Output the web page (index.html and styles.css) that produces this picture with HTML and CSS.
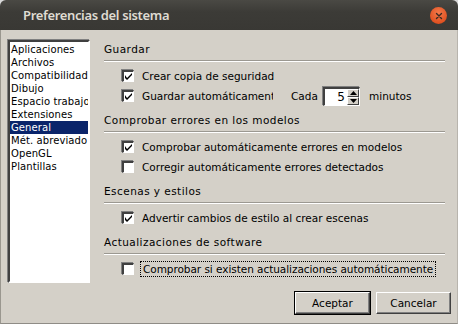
FILE: index.html
```html
<!DOCTYPE html>
<html lang="es">
<head>
  <meta charset="utf-8">
  <title>Preferencias del sistema</title>
  <link rel="stylesheet" href="styles.css">
</head>
<body>
  <div class="window">
    <div class="titlebar">
      <span class="title">Preferencias del sistema</span>
      <span class="close">
        <svg width="16" height="16" viewBox="0 0 16 16"><path d="M5.5 5.5 L10.5 10.5 M10.5 5.5 L5.5 10.5" stroke="#3b2a22" stroke-width="1.4" stroke-linecap="round"/></svg>
      </span>
    </div>
    <div class="dialog">
      <div class="main">
        <ul class="pages">
          <li>Aplicaciones</li>
          <li>Archivos</li>
          <li>Compatibilidad</li>
          <li>Dibujo</li>
          <li>Espacio trabajo</li>
          <li>Extensiones</li>
          <li class="selected">General</li>
          <li>Mét. abreviado</li>
          <li>OpenGL</li>
          <li>Plantillas</li>
        </ul>

        <div class="panel">
          <div class="section-title first">Guardar</div>
          <div class="rows">
            <div class="row"><span class="check on"></span><span class="label">Crear copia de seguridad</span></div>
            <div class="row">
              <span class="check on"></span><span class="label clipped">Guardar automáticamente</span>
              <span class="cada">Cada</span>
              <span class="spin">
                <span class="spin-value">5</span>
                <span class="spin-btns">
                  <span class="spin-btn"><svg width="7" height="4" viewBox="0 0 7 4"><path d="M3.5 0 L7 4 L0 4 Z" fill="#000"/></svg></span>
                  <span class="spin-btn"><svg width="7" height="4" viewBox="0 0 7 4"><path d="M0 0 L7 0 L3.5 4 Z" fill="#000"/></svg></span>
                </span>
              </span>
              <span class="minutos">minutos</span>
            </div>
          </div>

          <div class="section-title">Comprobar errores en los modelos</div>
          <div class="rows">
            <div class="row"><span class="check on"></span><span class="label">Comprobar automáticamente errores en modelos</span></div>
            <div class="row"><span class="check"></span><span class="label">Corregir automáticamente errores detectados</span></div>
          </div>

          <div class="section-title">Escenas y estilos</div>
          <div class="rows">
            <div class="row"><span class="check on"></span><span class="label">Advertir cambios de estilo al crear escenas</span></div>
          </div>

          <div class="section-title">Actualizaciones de software</div>
          <div class="rows">
            <div class="row"><span class="check"></span><span class="label focused">Comprobar si existen actualizaciones automáticamente</span></div>
          </div>
        </div>
      </div>

      <div class="buttons">
        <button class="btn default">Aceptar</button>
        <button class="btn">Cancelar</button>
      </div>
    </div>
  </div>
</body>
</html>
```

FILE: styles.css
```css
html, body {
  margin: 0;
  padding: 0;
  background: #d9d9d9;
}

.window {
  width: 458px;
  height: 324px;
  display: flex;
  flex-direction: column;
  font-family: "DejaVu Sans", sans-serif;
  font-size: 10.5px;
  color: #000;
}

.titlebar {
  height: 30px;
  flex: none;
  display: flex;
  align-items: center;
  justify-content: space-between;
  padding: 0 11px 0 23px;
  border-radius: 6px 6px 0 0;
  background: linear-gradient(#4a4944, #3c3b37 40%, #393834);
}

.title {
  font-family: "Noto Sans", sans-serif;
  font-size: 13px;
  font-weight: 600;
  color: #dfdbd2;
  letter-spacing: -0.35px;
  margin-top: -1px;
}

.close {
  width: 17px;
  height: 17px;
  border-radius: 50%;
  background: radial-gradient(circle at 50% 35%, #f47a4b, #e05222 70%, #c9441a);
  display: flex;
  align-items: center;
  justify-content: center;
  margin-top: 1px;
}

.dialog {
  flex: 1;
  background: #d4d0c8;
  border-left: 1px solid #9a978f;
  border-right: 1px solid #b8b4ad;
  border-bottom: 1px solid #8f8c86;
  padding: 10px 6px 0 6px;
  display: flex;
  flex-direction: column;
}

.main {
  display: flex;
  height: 243px;
}

.pages {
  list-style: none;
  margin: 0 0 0 1px;
  padding: 1px 0 0 0;
  width: 78px;
  height: 238px;
  background: #fff;
  border-top: 2px solid #404040;
  border-left: 2px solid #404040;
  border-right: 2px solid #fff;
  border-bottom: 2px solid #fff;
  box-shadow: -1px -1px 0 #808080, 1px 1px 0 #d4d0c8;
  overflow: hidden;
}

.pages li {
  height: 13px;
  line-height: 13px;
  padding-left: 1px;
  white-space: nowrap;
  overflow: hidden;
  font-size: 10px;
  letter-spacing: 0.1px;
}

.pages li.selected {
  background: #0a246a;
  color: #fff;
}

.panel {
  flex: 1;
  margin-left: 14px;
  margin-right: 6px;
  padding-top: 3px;
}

.section-title {
  height: 13px;
  line-height: 13px;
  padding-bottom: 4px;
  border-bottom: 1px solid #9b9891;
  box-shadow: 0 1px 0 #fff;
  letter-spacing: 0.45px;
  margin-top: 8px;
  white-space: nowrap;
}

.section-title.first {
  margin-top: 0;
}

.rows {
  padding-left: 16px;
  margin-top: 5px;
}

.row {
  height: 20px;
  display: flex;
  align-items: center;
  white-space: nowrap;
}

.check {
  width: 9px;
  height: 9px;
  flex: none;
  background: #fff;
  border-top: 2px solid #404040;
  border-left: 2px solid #404040;
  border-right: 1px solid #fff;
  border-bottom: 1px solid #fff;
  box-shadow: -1px -1px 0 #808080, 1px 1px 0 #d4d0c8;
  margin: 0 8px 0 2px;
  position: relative;
}

.check.on::after {
  content: "";
  position: absolute;
  left: 1px;
  top: 1px;
  width: 7px;
  height: 7px;
  background: url("data:image/svg+xml;utf8,<svg xmlns='http://www.w3.org/2000/svg' width='7' height='7' viewBox='0 0 7 7'><path d='M0 2 L0 5 L2 7 L7 2 L7 0 L2 5 Z' fill='black'/></svg>") no-repeat;
}

.label.clipped {
  width: 131px;
  overflow: hidden;
}

.label.focused {
  outline: 1px dotted #000;
  outline-offset: 1px;
  padding: 0 1px;
  letter-spacing: -0.05px;
}

.cada {
  margin-left: 18px;
  width: 32px;
}

.spin {
  display: flex;
  width: 34px;
  height: 16px;
  background: #fff;
  border-top: 2px solid #404040;
  border-left: 2px solid #404040;
  border-right: 1px solid #fff;
  border-bottom: 1px solid #fff;
  box-shadow: -1px -1px 0 #808080, 1px 1px 0 #d4d0c8;
}

.spin-value {
  flex: 1;
  text-align: right;
  font-size: 12px;
  line-height: 16px;
  padding-right: 2px;
}

.spin-btns {
  width: 12px;
  display: flex;
  flex-direction: column;
}

.spin-btn {
  flex: 1;
  background: #d4d0c8;
  box-sizing: border-box;
  border-top: 1px solid #fff;
  border-left: 1px solid #fff;
  border-right: 1px solid #404040;
  border-bottom: 1px solid #404040;
  display: flex;
  align-items: center;
  justify-content: center;
}

.minutos {
  margin-left: 9px;
}

.buttons {
  display: flex;
  justify-content: flex-end;
  gap: 6px;
  margin-top: 9px;
}

.btn {
  width: 75px;
  height: 22px;
  font-family: "DejaVu Sans", sans-serif;
  font-size: 10.5px;
  color: #000;
  background: #d4d0c8;
  border-top: 1px solid #fff;
  border-left: 1px solid #fff;
  border-right: 1px solid #404040;
  border-bottom: 1px solid #404040;
  box-shadow: inset -1px -1px 0 #808080;
  padding: 0;
}

.btn.default {
  outline: 1px solid #000;
}
```
